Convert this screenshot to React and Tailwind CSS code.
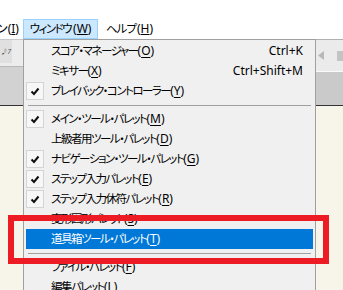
import React from 'react';

const font = "font-['Noto_Sans','Noto_Sans_CJK_JP',sans-serif] [font-feature-settings:'palt']";

function Check() {
  return (
    <div className="w-[18px] h-[18px] border border-[#d4d4d4] bg-[#f7f7f7] flex items-center justify-center">
      <svg width="10" height="9" viewBox="0 0 10 9">
        <path d="M1.5 4.5 L4 7 L8.5 1.5" stroke="#111" strokeWidth="2" fill="none" />
      </svg>
    </div>
  );
}

function Item({ label, k, shortcut, checked, active }) {
  return (
    <div className={`shrink-0 flex items-center h-[20px] mx-[2px] ${active ? 'bg-[#0078d7] text-white' : 'text-black'}`}>
      <div className="w-[25px] h-[20px] flex items-center">{checked && <Check />}</div>
      <span className="flex-1 whitespace-nowrap">
        <span className="text-[11.5px] tracking-[-1.5px]">{label}</span>(<span className="underline underline-offset-[2px]">{k}</span>)
      </span>
      {shortcut && <span className="pr-[10px] whitespace-nowrap">{shortcut}</span>}
    </div>
  );
}

function Sep() {
  return (
    <div className="shrink-0 h-[8px] flex items-center px-[4px]">
      <div className="flex-1 h-[1px] bg-[#a0a0a0]" />
    </div>
  );
}

export default function App() {
  return (
    <div className={`w-[343px] h-[290px] overflow-hidden relative bg-white text-[12px] leading-none ${font}`}>
      <div className="h-[19px]" />
      {/* menu bar */}
      <div className="h-[20px] flex items-center text-black">
        <span className="-ml-[3px] w-[26px] whitespace-nowrap">ン(<span className="underline">I</span>)</span>
        <div className="w-[75px] h-[20px] bg-[#cce8ff] border border-[#99d1ff] flex items-center justify-center whitespace-nowrap">
          <span className="text-[11.5px] tracking-[-1.5px] mr-[2px]">ウィンドウ</span>(<span className="underline">W</span>)
        </div>
        <span className="ml-[8px] whitespace-nowrap">
          <span className="text-[11.5px] tracking-[-1px] mr-[1px]">ヘルプ</span>(<span className="underline">H</span>)
        </span>
      </div>

      <div className="flex h-[260px] overflow-hidden">
        {/* left strip */}
        <div className="w-[23px] flex flex-col">
          <div className="h-[27px] shrink-0 bg-[#ececec] flex items-start border-t border-[#c8c8c8]">
            <div className="w-[12px] h-[23px] bg-[#e0e0e0] flex items-center justify-end text-[7px] text-[#555] italic pr-[1px]">♪7</div>
          </div>
          <div className="h-[39px] shrink-0 bg-[#d2d2d2] border-t border-[#b8b8b8]" />
          <div className="h-[1px] shrink-0 bg-[#333]" />
          <div className="flex-1 bg-[#f7f5ea]" />
        </div>

        {/* dropdown */}
        <div className="w-[293px] bg-[#f0f0f0] border border-b-0 border-[#a0a0a0] pt-[1px] flex flex-col">
          <Item label="スコア・マネージャー" k="O" shortcut="Ctrl+K" />
          <Item label="ミキサー" k="X" shortcut="Ctrl+Shift+M" />
          <Item label="プレイバック・コントローラー" k="Y" checked />
          <Sep />
          <Item label="メイン・ツール・パレット" k="M" checked />
          <Item label="上級者用ツール・パレット" k="D" />
          <Item label="ナビゲーション・ツール・パレット" k="G" checked />
          <Item label="ステップ入力パレット" k="E" checked />
          <Item label="ステップ入力休符パレット" k="R" checked />
          <Item label="変形図形パレット" k="S" />
          <Item label="道具箱ツール・パレット" k="T" active />
          <Sep />
          <Item label="ファイル・パレット" k="F" />
          <Item label="編集パレット" k="L" />
        </div>

        {/* right strip */}
        <div className="w-[27px] flex flex-col">
          <div className="h-[32px] shrink-0 bg-[#ebebeb] border-t border-[#b0b0b0] flex items-center justify-between pl-[2px]">
            <svg width="6" height="9" viewBox="0 0 6 9"><path d="M6 0 L0 4.5 L6 9 Z" fill="#b8b8b8" /></svg>
            <div className="w-[6px] h-[10px] bg-[#c4c4c4]" />
          </div>
          <div className="h-[1px] shrink-0 bg-[#fafafa]" />
          <div className="h-[33px] shrink-0 bg-[#cacaca]" />
          <div className="h-[1px] shrink-0 bg-[#333]" />
          <div className="flex-1 bg-[#f7f5ea]" />
        </div>
      </div>

      {/* annotation */}
      <div className="absolute left-[8px] top-[215px] w-[321px] h-[49px] border-[6px] border-[#ed1c24]" />
    </div>
  );
}
